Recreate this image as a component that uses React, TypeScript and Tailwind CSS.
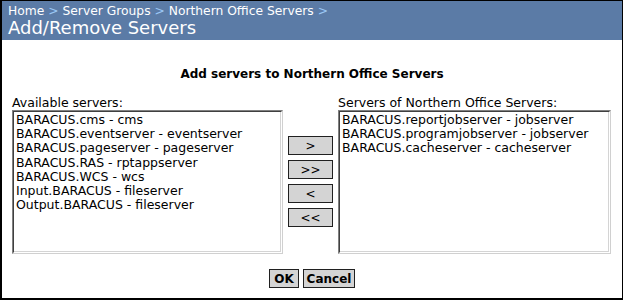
import React from "react";

const available = [
  "BARACUS.cms - cms",
  "BARACUS.eventserver - eventserver",
  "BARACUS.pageserver - pageserver",
  "BARACUS.RAS - rptappserver",
  "BARACUS.WCS - wcs",
  "Input.BARACUS - fileserver",
  "Output.BARACUS - fileserver",
];

const assigned = [
  "BARACUS.reportjobserver - jobserver",
  "BARACUS.programjobserver - jobserver",
  "BARACUS.cacheserver - cacheserver",
];

function ListBox({ items, width }: { items: string[]; width: string }) {
  return (
    <div
      className={`${width} h-[144px] border border-t-[#808080] border-l-[#808080] border-r-[#d0d0d0] border-b-[#d0d0d0] bg-white`}
    >
      <div className="h-full border border-t-[#404040] border-l-[#404040] border-r-white border-b-white">
        <div className="h-full border-r border-b border-[#d4d4d4] pl-[2px] pt-[1px]">
          {items.map((item) => (
            <div key={item} className="text-[12.5px] leading-[14.2px] whitespace-nowrap">
              {item}
            </div>
          ))}
        </div>
      </div>
    </div>
  );
}

function MoveButton({ label }: { label: string }) {
  return (
    <button className="w-[45px] h-[19px] bg-[#d4d4d4] border border-[#202020] text-[12px] leading-none text-black flex items-center justify-center">
      {label}
    </button>
  );
}

export default function App() {
  return (
    <div
      className="w-[623px] h-[300px] bg-white border-t border-r border-l-2 border-b-2 border-black text-[12px] text-black overflow-hidden"
      style={{ fontFamily: '"DejaVu Sans", Verdana, sans-serif' }}
    >
      <div className="h-[39px] bg-[#5b7ba6] pl-[6px] pt-[3px] text-white">
        <div className="text-[12.3px] leading-[15px]">
          Home <span className="text-[#9cc8f5]">&gt;</span> Server Groups{" "}
          <span className="text-[#9cc8f5]">&gt;</span> Northern Office Servers{" "}
          <span className="text-[#9cc8f5]">&gt;</span>
        </div>
        <div className="text-[18px] leading-[18px]">Add/Remove Servers</div>
      </div>

      <div className="mt-[27px] text-center font-bold leading-[15px]">
        Add servers to Northern Office Servers
      </div>

      <div className="mt-[13px] pl-[10px] flex gap-[5px]">
        <div className="flex flex-col">
          <div className="text-[12.5px] leading-[15px]">Available servers:</div>
          <ListBox items={available} width="w-[271px]" />
        </div>
        <div className="pt-[41px] flex flex-col gap-[5px]">
          <MoveButton label=">" />
          <MoveButton label=">>" />
          <MoveButton label="<" />
          <MoveButton label="<<" />
        </div>
        <div className="flex flex-col">
          <div className="text-[12.5px] leading-[15px]">Servers of Northern Office Servers:</div>
          <ListBox items={assigned} width="w-[273px]" />
        </div>
      </div>

      <div className="mt-[15px] flex justify-center gap-[4px]">
        <button className="w-[30px] h-[19px] bg-[#d4d4d4] border border-[#202020] font-bold leading-none flex items-center justify-center">
          OK
        </button>
        <button className="w-[52px] h-[19px] bg-[#d4d4d4] border border-[#202020] font-bold leading-none flex items-center justify-center">
          Cancel
        </button>
      </div>
    </div>
  );
}
